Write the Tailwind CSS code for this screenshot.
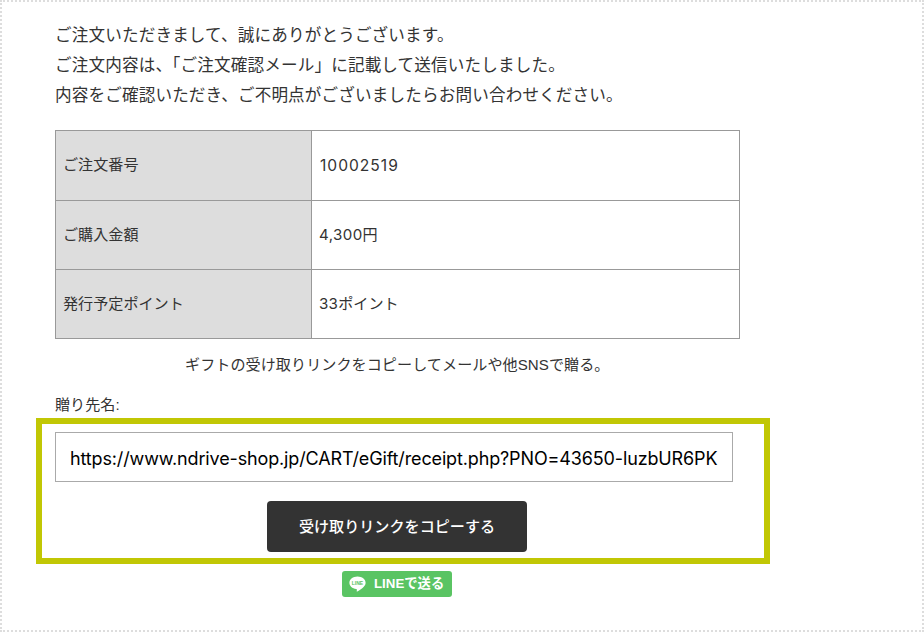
<!DOCTYPE html>
<html lang="ja">
<head>
  <meta charset="UTF-8" />
  <meta name="viewport" content="width=device-width, initial-scale=1" />
  <title>ご注文完了</title>
  <script src="https://cdn.jsdelivr.net/npm/@tailwindcss/browser@4"></script>
</head>
<body class="bg-white text-[#333] font-['Liberation_Sans','Noto_Sans_CJK_JP',sans-serif]">
  <main class="w-[924px] h-[632px] overflow-hidden border-2 border-dotted border-[#ddd] pl-[34px] pt-[19px]">
    <div class="h-[91px] pl-[19px] text-[16.6px] leading-[30px] tracking-[0.14px] whitespace-nowrap">
      <p>ご注文いただきまして、誠にありがとうございます。</p>
      <p>ご注文内容は、「ご注文確認メール」に記載して送信いたしました。</p>
      <p>内容をご確認いただき、ご不明点がございましたらお問い合わせください。</p>
    </div>

    <table class="ml-[19px] mt-[18px] w-[685px] table-fixed border-collapse text-[15.1px] text-left">
      <tr class="h-[70px]">
        <th class="w-[256px] border border-[#999] bg-[#ddd] px-[7px] font-normal">ご注文番号</th>
        <td class="border border-[#999] px-2 font-['Inter','Noto_Sans_CJK_JP',sans-serif]"><span class="text-[15.6px] tracking-[1px]">10002519</span></td>
      </tr>
      <tr class="h-[69px]">
        <th class="border border-[#999] bg-[#ddd] px-[7px] font-normal">ご購入金額</th>
        <td class="border border-[#999] px-[7px] font-['Inter','Noto_Sans_CJK_JP',sans-serif]"><span class="tracking-[0.4px]">4,300</span>円</td>
      </tr>
      <tr class="h-[69px]">
        <th class="border border-[#999] bg-[#ddd] px-[7px] font-normal">発行予定ポイント</th>
        <td class="border border-[#999] px-[7px] font-['Inter','Noto_Sans_CJK_JP',sans-serif]"><span class="tracking-[0.3px]">33</span>ポイント</td>
      </tr>
    </table>

    <p class="mt-[14px] ml-[149px] text-[15.1px] leading-6 tracking-[0.05px] whitespace-nowrap">ギフトの受け取りリンクをコピーしてメールや他SNSで贈る。</p>
    <p class="mt-4 ml-[19px] text-[15.1px] leading-6">贈り先名:</p>

    <div class="mt-[1px] w-[734px] h-[146px] border-6 border-[#c1c704] pl-[13px] pt-2">
      <input type="text" readonly value="https://www.ndrive-shop.jp/CART/eGift/receipt.php?PNO=43650-luzbUR6PK" class="block w-[678px] h-[50px] border border-[#aaa] px-[14px] pt-[2px] font-['Inter',sans-serif] text-[18px] tracking-[-0.14px] text-black" />
      <button type="button" class="block mt-[19px] ml-[212px] w-[260px] h-[51px] rounded-[4px] bg-[#333] pt-[2px] text-[15.1px] font-medium text-white">受け取りリンクをコピーする</button>
    </div>

    <a href="#" class="mt-[7px] ml-[306px] flex w-[110px] h-[26px] items-center rounded-[3px] bg-[#5ac463] pl-[7px] text-[13.3px] font-bold text-white whitespace-nowrap">
      <svg class="mr-[8px] shrink-0" width="17" height="16" viewBox="0 0 17 16">
        <path d="M8.5 .5C4 .5.4 3.3.4 6.8c0 3.2 2.9 5.8 6.8 6.2.9.2.7.7.5 2.2 0 .4.2.5.6.3 2.3-1.2 5-3.1 6.7-5 1.1-1.2 1.6-2.4 1.6-3.7C16.6 3.3 13 .5 8.5.5z" fill="#fff" />
        <text x="8.5" y="8.6" text-anchor="middle" font-family="Liberation Sans" font-size="5" font-weight="bold" fill="#5ac463">LINE</text>
      </svg>
      LINEで送る
    </a>
  </main>
</body>
</html>
